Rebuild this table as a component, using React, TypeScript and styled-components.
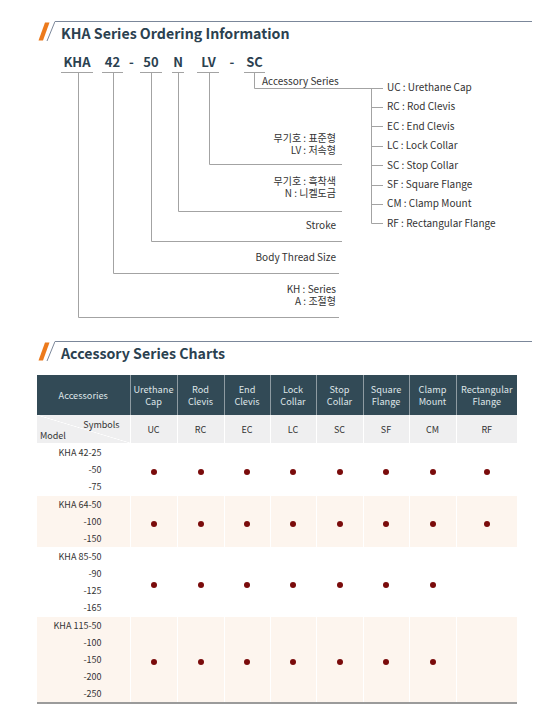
import React from 'react';
import styled, { createGlobalStyle } from 'styled-components';

const Global = createGlobalStyle`
  html, body { margin: 0; padding: 0; background: #ffffff; }
  body { font-family: "Noto Sans CJK KR", "Noto Sans", sans-serif; color: #333; }
`;

const Page = styled.div`
  width: 548px;
  box-sizing: border-box;
  padding: 21px 16px 0 37px;
  display: flex;
  flex-direction: column;
`;

const Heading = styled.div<{ $mt?: number }>`
  display: flex;
  align-items: flex-start;
  margin-top: ${p => p.$mt ?? 0}px;
`;

const Mark = styled.svg`
  flex: none;
  width: 18px;
  height: 21px;
  display: block;
`;

const HeadingText = styled.h2`
  flex: 1;
  margin: 0;
  border-top: 1px solid #7b879a;
  padding-left: 6px;
  font-size: 14.2px;
  line-height: 22px;
  font-weight: 700;
  color: #2b4150;
`;

const Canvas = styled.div`
  position: relative;
  height: 287px;
`;

const Lines = styled.svg`
  position: absolute;
  left: 0;
  top: 0;
  width: 495px;
  height: 287px;
`;

const Code = styled.span<{ $x: number }>`
  position: absolute;
  top: 10px;
  left: ${p => p.$x - 37 - 20}px;
  width: 40px;
  text-align: center;
  font-size: 13px;
  line-height: 16px;
  font-weight: 700;
  color: #2b4150;
`;

const Note = styled.div<{ $top: number }>`
  position: absolute;
  right: 196px;
  top: ${p => p.$top - 44}px;
  display: flex;
  flex-direction: column;
  align-items: flex-end;
`;

const NoteLine = styled.span`
  display: block;
  height: 12px;
  font-size: 10px;
  line-height: 12px;
  color: #333;
  white-space: nowrap;
`;

const AccTitle = styled.div`
  position: absolute;
  left: 225px;
  top: 31px;
  font-size: 10px;
  line-height: 12px;
  color: #333;
`;

const AccList = styled.ul`
  position: absolute;
  left: 350px;
  top: 33px;
  margin: 0;
  padding: 0;
  list-style: none;
  display: flex;
  flex-direction: column;
`;

const AccItem = styled.li`
  height: 19.4px;
  line-height: 19.4px;
  font-size: 10px;
  color: #333;
  white-space: nowrap;
`;

const Table = styled.table`
  margin-top: 11px;
  width: 480px;
  border-collapse: collapse;
  table-layout: fixed;
  border-bottom: 2px solid #9b9b9b;
`;

const HeadCell = styled.th`
  height: 40px;
  padding: 0;
  background: #324a56;
  color: #dfe5e8;
  font-weight: 400;
  font-size: 9.2px;
  line-height: 12px;
  text-align: center;
  border-left: 1px solid #8e9ba2;
  &:first-child { border-left: none; }
`;

const SymCell = styled.td`
  height: 28px;
  padding: 0;
  background: #efeff0;
  color: #333;
  font-size: 9px;
  text-align: center;
  border-left: 1px solid #ffffff;
  &:first-child { border-left: none; }
`;

const CornerCell = styled(SymCell)`
  background: #efeff0 linear-gradient(to top right, transparent calc(50% - 0.6px), #ffffff 50%, transparent calc(50% + 0.6px));
`;

const Corner = styled.div`
  display: flex;
  flex-direction: column;
  font-size: 9px;
  line-height: 11px;
  padding: 2px 10px 0 3px;
`;

const CornerTop = styled.span`
  align-self: flex-end;
`;

const CornerBottom = styled.span`
  align-self: flex-start;
`;

const BodyRow = styled.tr<{ $cream: boolean }>`
  background: ${p => (p.$cream ? '#fdf5ee' : '#ffffff')};
`;

const ModelCell = styled.td`
  padding: 0 28px 0 0;
  text-align: right;
  font-size: 9px;
  line-height: 17px;
  color: #333;
  border-top: 1px solid #ffffff;
`;

const DotCell = styled.td`
  padding: 0;
  text-align: center;
  vertical-align: middle;
  border-left: 1px solid #ffffff;
  border-top: 1px solid #ffffff;
`;

const Dot = styled.span`
  display: inline-block;
  width: 6px;
  height: 6px;
  border-radius: 50%;
  background: #7a0b0b;
  vertical-align: middle;
`;

const widths = [93, 47, 47, 46, 46, 47, 46, 47, 61];

const headers: [string, string][] = [
  ['Urethane', 'Cap'],
  ['Rod', 'Clevis'],
  ['End', 'Clevis'],
  ['Lock', 'Collar'],
  ['Stop', 'Collar'],
  ['Square', 'Flange'],
  ['Clamp', 'Mount'],
  ['Rectangular', 'Flange'],
];
const symbols = ['UC', 'RC', 'EC', 'LC', 'SC', 'SF', 'CM', 'RF'];

const rows = [
  { models: ['KHA 42-25', '-50', '-75'], dots: [1, 1, 1, 1, 1, 1, 1, 1] },
  { models: ['KHA 64-50', '-100', '-150'], dots: [1, 1, 1, 1, 1, 1, 1, 1] },
  { models: ['KHA 85-50', '-90', '-125', '-165'], dots: [1, 1, 1, 1, 1, 1, 1, 0] },
  { models: ['KHA 115-50', '-100', '-150', '-200', '-250'], dots: [1, 1, 1, 1, 1, 1, 1, 0] },
];

const accessories = [
  'UC : Urethane Cap',
  'RC : Rod Clevis',
  'EC : End Clevis',
  'LC : Lock Collar',
  'SC : Stop Collar',
  'SF : Square Flange',
  'CM : Clamp Mount',
  'RF : Rectangular Flange',
];

const notes: { top: number; lines: string[] }[] = [
  { top: 132, lines: ['무기호 : 표준형', 'LV : 저속형'] },
  { top: 175, lines: ['무기호 : 흑착색', 'N : 니켈도금'] },
  { top: 219, lines: ['Stroke'] },
  { top: 251, lines: ['Body Thread Size'] },
  { top: 283, lines: ['KH : Series', 'A : 조절형'] },
];

const codes: [number, string][] = [
  [77, 'KHA'], [112.5, '42'], [131.5, '-'], [151, '50'], [178, 'N'], [208.5, 'LV'], [232, '-'], [254.5, 'SC'],
];

const HeadingMark = () => (
  <Mark viewBox="0 0 18 21">
    <polygon points="8,1.5 12.5,1.5 6,19.5 1.5,19.5" fill="#ec7a1c" />
    <line x1="10" y1="20" x2="18" y2="0.5" stroke="#7b879a" strokeWidth="1" />
  </Mark>
);

const stroke = '#a3a3a3';

const OrderingDiagram = () => {
  const underlines: [number, number][] = [
    [61, 93], [102, 123], [140, 162], [172, 184], [197, 219], [244, 265],
  ];
  const branches: [number, number, number][] = [
    [78, 317, 339],
    [113, 273, 339],
    [151, 241, 342],
    [178, 211, 342],
    [209, 164, 342],
  ];
  const ticks = [107, 126, 146, 165, 185, 204, 223];
  return (
    <Canvas>
      <Lines viewBox="37 44 495 287">
        {underlines.map(([a, b]) => (
          <line key={a} x1={a} y1={72.5} x2={b} y2={72.5} stroke={stroke} strokeWidth="1" />
        ))}
        {branches.map(([x, y, end]) => (
          <polyline key={x} points={`${x + 0.5},73 ${x + 0.5},${y + 0.5} ${end},${y + 0.5}`} fill="none" stroke={stroke} strokeWidth="1" />
        ))}
        <polyline points="254.5,73 254.5,88.5 383,88.5" fill="none" stroke={stroke} strokeWidth="1" />
        <line x1="371.5" y1="88.5" x2="371.5" y2="223.5" stroke={stroke} strokeWidth="1" />
        {ticks.map(y => (
          <line key={y} x1="371.5" y1={y + 0.5} x2="383" y2={y + 0.5} stroke={stroke} strokeWidth="1" />
        ))}
      </Lines>
      {codes.map(([x, t], i) => (
        <Code key={i} $x={x}>{t}</Code>
      ))}
      <AccTitle>Accessory Series</AccTitle>
      <AccList>
        {accessories.map(a => (
          <AccItem key={a}>{a}</AccItem>
        ))}
      </AccList>
      {notes.map(n => (
        <Note key={n.top} $top={n.top}>
          {n.lines.map(l => (
            <NoteLine key={l}>{l}</NoteLine>
          ))}
        </Note>
      ))}
    </Canvas>
  );
};

const AccessoryTable = () => (
  <Table>
    <colgroup>
      {widths.map((w, i) => (
        <col key={i} style={{ width: w }} />
      ))}
    </colgroup>
    <thead>
      <tr>
        <HeadCell>Accessories</HeadCell>
        {headers.map(([a, b]) => (
          <HeadCell key={a + b}>{a}<br />{b}</HeadCell>
        ))}
      </tr>
      <tr>
        <CornerCell>
          <Corner>
            <CornerTop>Symbols</CornerTop>
            <CornerBottom>Model</CornerBottom>
          </Corner>
        </CornerCell>
        {symbols.map(s => (
          <SymCell key={s}>{s}</SymCell>
        ))}
      </tr>
    </thead>
    <tbody>
      {rows.map((r, i) => (
        <BodyRow key={i} $cream={i % 2 === 1}>
          <ModelCell>
            {r.models.map(m => (
              <div key={m}>{m}</div>
            ))}
          </ModelCell>
          {r.dots.map((d, j) => (
            <DotCell key={j}>{d ? <Dot /> : null}</DotCell>
          ))}
        </BodyRow>
      ))}
    </tbody>
  </Table>
);

export default function App() {
  return (
    <>
      <Global />
      <Page>
        <Heading>
          <HeadingMark />
          <HeadingText>KHA Series Ordering Information</HeadingText>
        </Heading>
        <OrderingDiagram />
        <Heading $mt={10}>
          <HeadingMark />
          <HeadingText>Accessory Series Charts</HeadingText>
        </Heading>
        <AccessoryTable />
      </Page>
    </>
  );
}
